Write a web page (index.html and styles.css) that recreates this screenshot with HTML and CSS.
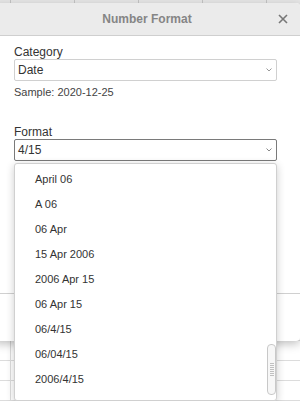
FILE: index.html
```html
<!DOCTYPE html>
<html lang="en">
<head>
    <meta charset="UTF-8">
    <meta name="viewport" content="width=device-width, initial-scale=1.0">
    <title>Number Format</title>
    <link rel="stylesheet" href="styles.css">
</head>
<body>
    <div class="sheet">
        <div class="col-header"></div>

        <div class="dialog">
            <div class="dialog-head">
                <span></span>
                <span class="title">Number Format</span>
                <span class="close">
                    <svg width="10" height="10" viewBox="0 0 10 10"><path d="M1 1L9 9M9 1L1 9" stroke="#777" stroke-width="1.6" fill="none"/></svg>
                </span>
            </div>

            <div class="dialog-body">
                <label>Category</label>
                <div class="select">
                    <span>Date</span>
                    <svg width="6" height="4" viewBox="0 0 6 4"><path d="M0.5 0.5L3 3L5.5 0.5" stroke="#999" fill="none"/></svg>
                </div>
                <p class="sample">Sample: 2020-12-25</p>

                <label class="format-label">Format</label>
                <div class="select active">
                    <span>4/15</span>
                    <svg width="6" height="4" viewBox="0 0 6 4"><path d="M0.5 0.5L3 3L5.5 0.5" stroke="#888" fill="none"/></svg>
                </div>
            </div>

            <div class="dialog-foot"></div>

            <!-- open format list -->
            <ul class="dropdown">
                <li>April 06</li>
                <li>A 06</li>
                <li>06 Apr</li>
                <li>15 Apr 2006</li>
                <li>2006 Apr 15</li>
                <li>06 Apr 15</li>
                <li>06/4/15</li>
                <li>06/04/15</li>
                <li>2006/4/15</li>
                <div class="thumb"><div class="grip"></div></div>
            </ul>
        </div>
    </div>
</body>
</html>
```

FILE: styles.css
```css
body {
    margin: 0;
    padding: 0;
    font-family: "Liberation Sans", Arial, sans-serif;
    font-size: 12px;
    color: #333;
}

.sheet {
    position: relative;
    width: 300px;
    height: 401px;
    overflow: hidden;
    background-color: #fff;
    background-image:
        repeating-linear-gradient(to right, transparent 0, transparent 10px, #dcdcdc 10px, #dcdcdc 11px, transparent 11px, transparent 64px),
        repeating-linear-gradient(to bottom, #dcdcdc 0, #dcdcdc 1px, transparent 1px, transparent 20px);
}

.col-header {
    height: 20px;
    background-color: #e6e6e6;
    background-image: repeating-linear-gradient(to right, transparent 0, transparent 10px, #c4c4c4 10px, #c4c4c4 11px, transparent 11px, transparent 64px);
}

.dialog {
    position: absolute;
    top: 3px;
    left: -6px;
    width: 306px;
    height: 338px;
    background: #fff;
    border-radius: 4px;
    box-shadow: 0 3px 10px rgba(0, 0, 0, 0.25);
    display: flex;
    flex-direction: column;
}

.dialog-head {
    height: 32px;
    background: #ebebeb;
    border-bottom: 1px solid #cfcfcf;
    border-radius: 4px 4px 0 0;
    display: grid;
    grid-template-columns: 1fr auto 1fr;
    align-items: center;
}

.title {
    font-size: 12px;
    font-weight: bold;
    color: #858585;
}

.close {
    justify-self: end;
    margin-right: 12px;
    display: flex;
}

.dialog-body {
    flex: 1;
    padding: 10px 23px 0 20px;
}

label {
    display: block;
    line-height: 13px;
    color: #333;
}

.select {
    height: 20px;
    border: 1px solid #d0d0d0;
    border-radius: 2px;
    padding: 0 4px 0 3px;
    display: flex;
    align-items: center;
    justify-content: space-between;
    color: #333;
}

.select.active {
    border-color: #7a7a7a;
}

.sample {
    margin: 4px 0 0 0;
    font-size: 11px;
    line-height: 14px;
    color: #444;
}

.format-label {
    margin-top: 27px;
}

.dialog-foot {
    height: 47px;
    border-top: 1px solid #d0d0d0;
}

.dropdown {
    position: absolute;
    top: 160px;
    left: 20px;
    width: 261px;
    height: 233px;
    margin: 0;
    padding: 3px 0 0 0;
    box-sizing: content-box;
    list-style: none;
    background: #fff;
    border: 1px solid #d0d0d0;
    border-radius: 3px;
    box-shadow: 0 2px 8px rgba(0, 0, 0, 0.2);
    overflow: hidden;
}

.dropdown li {
    height: 25px;
    line-height: 25px;
    padding-left: 20px;
    font-size: 11px;
    color: #333;
}

.thumb {
    position: absolute;
    right: 0;
    top: 180px;
    width: 7px;
    height: 49px;
    border: 1px solid #c8c8c8;
    border-radius: 4px;
    background: #f7f7f7;
    display: flex;
    align-items: center;
    justify-content: center;
}

.grip {
    width: 4px;
    height: 13px;
    background: repeating-linear-gradient(to bottom, #c0c0c0 0, #c0c0c0 1px, transparent 1px, transparent 2px);
}
```
